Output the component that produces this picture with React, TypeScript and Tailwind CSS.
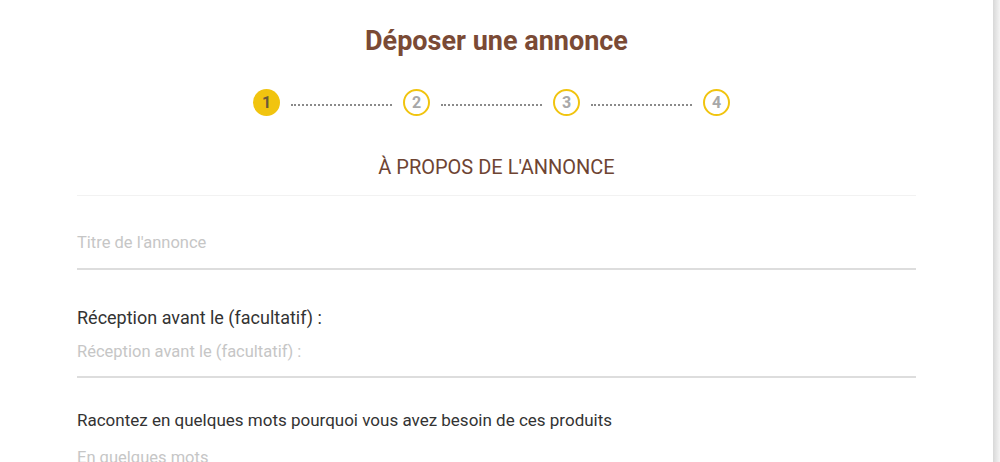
export default function App() {
  const steps = [1, 2, 3, 4];
  return (
    <div className="flex h-[462px] w-[1000px] overflow-hidden bg-white font-['Roboto',sans-serif]">
      <div className="flex-1 px-[77px] pt-[24px]">
        <h1 className="text-center text-[27px] font-bold leading-[34px] text-[#7a4a35]">
          Déposer une annonce
        </h1>

        <div className="mt-[31px] flex items-center justify-center pr-[10px]">
          {steps.map((n, i) => (
            <div key={n} className="flex items-center">
              {n === 1 ? (
                <div className="flex h-[27px] w-[27px] items-center justify-center rounded-full bg-[#f1c40f] text-[16px] font-bold text-[#6b5a3a]">
                  {n}
                </div>
              ) : (
                <div className="flex h-[27px] w-[27px] items-center justify-center rounded-full border-2 border-[#f1c40f] bg-white text-[16px] font-bold text-[#a8a8a8]">
                  {n}
                </div>
              )}
              {i < steps.length - 1 && (
                <div className="mx-[11px] mt-[4px] w-[101px] border-t-2 border-dotted border-[#8a8a8a]" />
              )}
            </div>
          ))}
        </div>

        <h2 className="mt-[39px] text-center text-[20px] uppercase leading-[24px] text-[#6e4433]">
          À propos de l'annonce
        </h2>
        <div className="mt-[16px] h-px bg-[#f2f2f2]" />

        <div className="mt-[37px] border-b-2 border-[#dddddd] pb-[15px] text-[16.5px] leading-[20px] text-[#c6c6c6]">
          Titre de l'annonce
        </div>

        <div className="mt-[37px] text-[18px] font-normal leading-[22px] text-[#333333]">
          Réception avant le (facultatif) :
        </div>
        <div className="mt-[13px] border-b-2 border-[#dddddd] pb-[14px] text-[16.5px] leading-[20px] text-[#c6c6c6]">
          Réception avant le (facultatif) :
        </div>

        <div className="mt-[31px] text-[17px] font-normal leading-[22px] text-[#333333]">
          Racontez en quelques mots pourquoi vous avez besoin de ces produits
        </div>
        <div className="mt-[17px] text-[16.5px] leading-[20px] text-[#c6c6c6]">
          En quelques mots
        </div>
      </div>
      <div className="w-[7px] bg-gradient-to-r from-[#d8d8d8] to-[#f4f4f4]" />
    </div>
  );
}
